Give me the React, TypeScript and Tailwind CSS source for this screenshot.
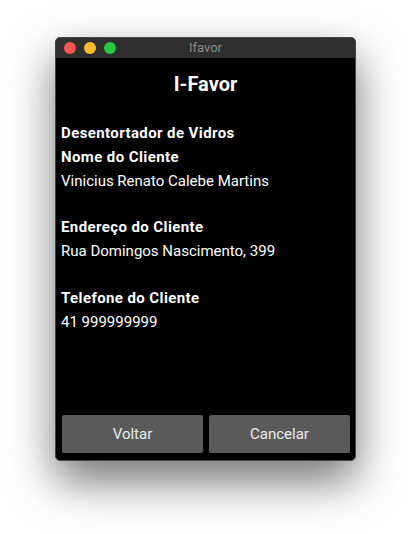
const FONT = { fontFamily: "Roboto, 'Noto Sans', sans-serif" };

export default function App() {
  return (
    <div className="w-[412px] h-[534px] bg-white pt-[37px] pl-[55px]" style={FONT}>
      <div className="w-[301px] h-[424px] rounded-[5px] border border-[#444] bg-black overflow-hidden flex flex-col shadow-[0_20px_45px_rgba(0,0,0,0.55)]">
        {/* title bar */}
        <div className="relative h-[20px] bg-[#2f2f2f] flex items-center">
          <div className="flex gap-[8px] pl-[8px]">
            <span className="w-[12px] h-[12px] rounded-full bg-[#fd5753]" />
            <span className="w-[12px] h-[12px] rounded-full bg-[#fdbc2e]" />
            <span className="w-[12px] h-[12px] rounded-full bg-[#28c840]" />
          </div>
          <div className="absolute inset-0 flex items-center justify-center text-[13px] text-[#8a8a8a]">
            Ifavor
          </div>
        </div>

        {/* content */}
        <div className="flex-1 flex flex-col">
          <h1 className="mt-[12px] text-center text-[20px] leading-[28px] font-bold text-white">I-Favor</h1>

          <div className="mt-[23px] px-[5px] text-[15px] leading-[24px] text-white">
            <p className="font-bold tracking-[0.4px]">Desentortador de Vidros</p>
            <p className="font-bold tracking-[0.4px]">Nome do Cliente</p>
            <p>Vinicius Renato Calebe Martins</p>

            <p className="mt-[22px] font-bold tracking-[0.4px]">Endereço do Cliente</p>
            <p>Rua Domingos Nascimento, 399</p>

            <p className="mt-[23px] font-bold tracking-[0.4px]">Telefone do Cliente</p>
            <p>41 999999999</p>
          </div>

          <div className="mt-auto flex gap-[6px] pl-[6px] pb-[7px]">
            <button className="w-[141px] h-[38px] rounded-[2px] bg-[#5a5a5a] text-[15px] text-[#ececec]">
              Voltar
            </button>
            <button className="w-[141px] h-[38px] rounded-[2px] bg-[#5a5a5a] text-[15px] text-[#ececec]">
              Cancelar
            </button>
          </div>
        </div>
      </div>
    </div>
  );
}
